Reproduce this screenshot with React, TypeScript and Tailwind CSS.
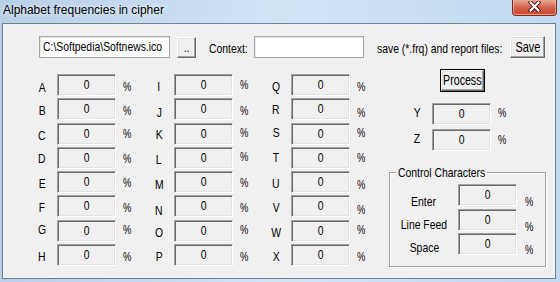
import React from "react";

const FONT = "font-['Liberation_Sans',Arial,sans-serif]";

const PT: Record<number, string> = {
  [-2]: "pt-[1.5px]",
  [-1]: "pt-[2.5px]",
  0: "pt-[3.5px]",
  1: "pt-[4.5px]",
  2: "pt-[5.5px]",
  3: "pt-[6.5px]",
  4: "pt-[7.5px]",
};

function S({ children, className = "" }: { children: React.ReactNode; className?: string }) {
  return <span className={"inline-block whitespace-nowrap scale-x-[0.8] " + className}>{children}</span>;
}

function Pct() {
  return <span className="inline-block whitespace-nowrap origin-left scale-x-[0.72]">%</span>;
}

function Field({ value = "0" }: { value?: string }) {
  return (
    <div className="w-[59px] h-[22px] shrink-0 border border-t-[#a0a0a0] border-l-[#a0a0a0] border-b-white border-r-white shadow-[inset_1px_1px_0_#696969,inset_-1px_-1px_0_#e3e3e3] bg-[#f0f0f0] text-center leading-[15px] pt-[2px]">
      <S>{value}</S>
    </div>
  );
}

function Raised({ className = "", children }: { className?: string; children: React.ReactNode }) {
  return (
    <div
      className={
        "flex items-center justify-center shrink-0 bg-[#f0f0f0] border border-t-white border-l-white border-b-[#696969] border-r-[#696969] shadow-[inset_-1px_-1px_0_#a0a0a0,inset_1px_1px_0_#e3e3e3] leading-[15px] " +
        className
      }
    >
      {children}
    </div>
  );
}

type Row = { l: string; lo: number; po: number };

const COLS: Row[][] = [
  [
    { l: "A", lo: 2, po: 1 },
    { l: "B", lo: 1, po: 1 },
    { l: "C", lo: 2, po: 0 },
    { l: "D", lo: 1, po: 1 },
    { l: "E", lo: 1, po: 0 },
    { l: "F", lo: 1, po: 1 },
    { l: "G", lo: -1, po: -1 },
    { l: "H", lo: 1, po: 1 },
  ],
  [
    { l: "I", lo: 1, po: -1 },
    { l: "J", lo: 3, po: 1 },
    { l: "K", lo: 1, po: -1 },
    { l: "L", lo: 2, po: -1 },
    { l: "M", lo: 2, po: 0 },
    { l: "N", lo: 4, po: 1 },
    { l: "O", lo: 2, po: -1 },
    { l: "P", lo: 1, po: 1 },
  ],
  [
    { l: "Q", lo: 1, po: 1 },
    { l: "R", lo: 0, po: 3 },
    { l: "S", lo: -1, po: -1 },
    { l: "T", lo: 0, po: 0 },
    { l: "U", lo: 1, po: 2 },
    { l: "V", lo: 1, po: 3 },
    { l: "W", lo: 2, po: -1 },
    { l: "X", lo: 1, po: 1 },
  ],
];

function LetterRow({ l, lo, po }: Row) {
  return (
    <div className="flex h-[22px]">
      <div className={"w-[30px] text-center leading-[15px] " + PT[lo]}>
        <S>{l}</S>
      </div>
      <Field />
      <div className={"w-[28px] pl-[7px] leading-[15px] " + PT[po]}>
        <Pct />
      </div>
    </div>
  );
}

function CtrlRow({ label, lpt, ppt, mt }: { label: string; lpt: string; ppt: string; mt: string }) {
  return (
    <div className={"flex h-[22px] " + mt}>
      <div className={"w-[68px] text-center leading-[15px] " + lpt}>
        <S>{label}</S>
      </div>
      <Field />
      <div className={"pl-[8px] leading-[15px] " + ppt}>
        <Pct />
      </div>
    </div>
  );
}

function CloseButton() {
  return (
    <div className="mr-[3px] w-[45px] h-[16px] rounded-b-[4px] border border-t-0 border-[#7b2d22] bg-linear-to-b from-[#e9a897] via-[#d2624c] to-[#c8472f] shadow-[inset_0_-1px_0_rgba(255,190,160,0.7),inset_1px_0_0_rgba(255,200,180,0.5),inset_-1px_0_0_rgba(255,200,180,0.5)] flex justify-center pt-[1px]">
      <svg width="13" height="11" viewBox="0 0 13 11">
        <path d="M2.5 1.5 L10.5 9.5 M10.5 1.5 L2.5 9.5" stroke="#4b1a12" strokeWidth="4" strokeLinecap="square" />
        <path d="M2.5 1.5 L10.5 9.5 M10.5 1.5 L2.5 9.5" stroke="#ffffff" strokeWidth="2" strokeLinecap="square" />
      </svg>
    </div>
  );
}

export default function App() {
  return (
    <div
      className={
        "w-[560px] h-[282px] overflow-hidden flex flex-col bg-linear-to-r from-[#b8cfe8] via-[#d3e4f5] to-[#c3d9f0] text-black text-[13px] " +
        FONT
      }
    >
      {/* Title bar */}
      <div className="flex h-[23px] items-start justify-between">
        <div className="pl-[3px] pt-[2px] leading-[15px] text-[13px] [text-shadow:0_0_6px_rgba(255,255,255,0.95)]">
          <span className="inline-block whitespace-nowrap origin-left scale-x-[0.92]">Alphabet frequencies in cipher</span>
        </div>
        <CloseButton />
      </div>

      {/* Client area */}
      <div className="ml-[2px] mr-[4px] h-[256px] border border-[#6f8196] bg-[#f0f0f0] flex flex-col">
        {/* Top row */}
        <div className="flex items-start pt-[12px] pl-[36px]">
          <div className="w-[131px] h-[22px] shrink-0 bg-white border border-[#a5a5a5] shadow-[inset_1px_1px_0_#e6e6e6] pl-[3px] pt-[2px] leading-[15px] overflow-hidden">
            <S className="origin-left">C:\Softpedia\Softnews.ico</S>
          </div>
          <Raised className="ml-[7px] mt-[1px] w-[19px] h-[21px]">
            <S>..</S>
          </Raised>
          <div className="ml-[13px] w-[38px] h-[22px] pt-[4.5px] leading-[15px]">
            <S className="origin-left">Context:</S>
          </div>
          <div className="ml-[7px] w-[110px] h-[22px] shrink-0 bg-white border border-[#a5a5a5] shadow-[inset_1px_1px_0_#e6e6e6]" />
          <div className="ml-[13px] w-[126px] h-[22px] pt-[4.5px] leading-[15px]">
            <S className="origin-left">save (*.frq) and report files:</S>
          </div>
          <Raised className="ml-[7px] w-[35px] h-[22px] text-[14px]">
            <span className="inline-block whitespace-nowrap scale-x-[0.78]">Save</span>
          </Raised>
        </div>

        {/* Main area */}
        <div className="flex items-start mt-[11px] pl-[24px]">
          <div className="flex pt-[5px]">
            {COLS.map((col, i) => (
              <div key={i} className="flex flex-col gap-[2.3px]">
                {col.map((r) => (
                  <LetterRow key={r.l} {...r} />
                ))}
              </div>
            ))}
          </div>

          <div className="ml-[11px] w-[157px] flex flex-col">
            <div className="ml-[51px] w-[45px] h-[23px] flex border border-black">
              <Raised className="w-full h-full text-[14px]">
                <span className="inline-block whitespace-nowrap scale-x-[0.76]">Process</span>
              </Raised>
            </div>

            <div className="flex h-[22px] mt-[11px]">
              <div className="ml-[13px] w-[30px] text-center leading-[15px] pt-[2px]">
                <S>Y</S>
              </div>
              <Field />
              <div className="pl-[7px] leading-[15px] pt-[2px]">
                <Pct />
              </div>
            </div>
            <div className="flex h-[22px] mt-[4px]">
              <div className="ml-[13px] w-[30px] text-center leading-[15px] pt-[2px]">
                <S>Z</S>
              </div>
              <Field />
              <div className="pl-[7px] leading-[15px] pt-[2.5px]">
                <Pct />
              </div>
            </div>

            <div className="relative mt-[21px] w-[157px] border border-[#a0a0a0] shadow-[inset_1px_1px_0_#ffffff,1px_1px_0_#ffffff] pt-[11px] pb-[11px]">
              <div className="absolute left-[6px] top-[-8.5px] w-[91px] h-[15px] bg-[#f0f0f0] pl-[2px] leading-[15px]">
                <S className="origin-left">Control Characters</S>
              </div>
              <CtrlRow label="Enter" lpt="pt-[9.5px]" ppt="pt-[10px]" mt="" />
              <CtrlRow label="Line Feed" lpt="pt-[8px]" ppt="pt-[9.5px]" mt="mt-[3px]" />
              <CtrlRow label="Space" lpt="pt-[7px]" ppt="pt-[9px]" mt="mt-[2px]" />
            </div>
          </div>
        </div>
      </div>
    </div>
  );
}
